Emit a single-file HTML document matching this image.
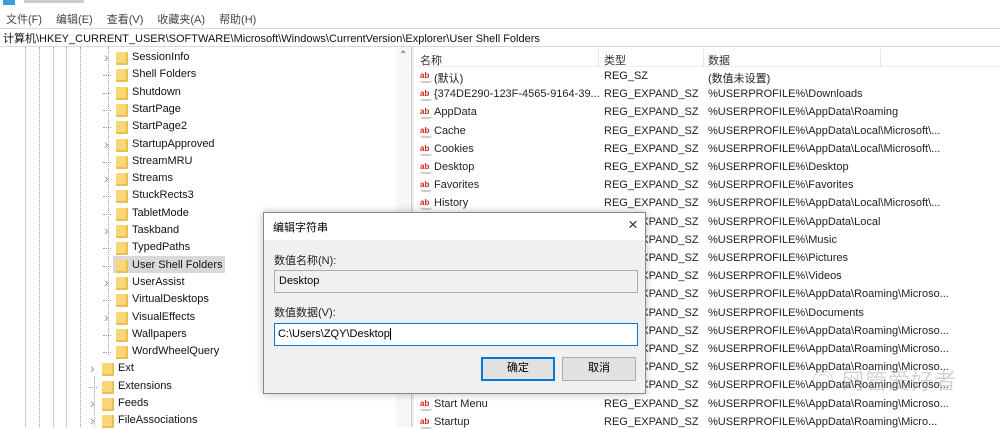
<!DOCTYPE html>
<html><head><meta charset="utf-8">
<style>
*{margin:0;padding:0;box-sizing:border-box}
body{width:1000px;height:422px;overflow:hidden;background:#fff;font-family:"Liberation Sans","Noto Sans CJK SC",sans-serif;font-size:11px;color:#000;position:relative}
.a{position:absolute;white-space:nowrap}
.menu span{color:#444;margin-right:14px}
.vl{position:absolute;top:47px;height:380px;border-left:1px dotted #a0a0a0;width:0}
.fold{position:absolute;width:12px;height:13px;background:#f8d774;border-radius:1px;box-shadow:inset -2px -2px 0 #e9bf4f}
.tx{position:absolute;font-size:11px;color:#111}
.exp{position:absolute;color:#999;font-size:14px;line-height:14px}
.hl{position:absolute;border-top:1px dotted #a0a0a0;width:8px}
.ab{position:absolute;width:12px;height:12px;font-size:8px;font-weight:bold;color:#c8261e;line-height:10px;border-bottom:2px solid #ccc;border-radius:0 0 3px 3px}
.ct{position:absolute;font-size:11px;color:#222}
</style></head><body>
<div class="a" style="left:3px;top:0;width:12px;height:5px;background:#3a9be0"></div>
<div class="a" style="left:24px;top:0;width:60px;height:3px;background:#ccc"></div>
<div class="a menu" style="left:6px;top:11px;font-size:11px"><span>文件(F)</span><span>编辑(E)</span><span>查看(V)</span><span>收藏夹(A)</span><span>帮助(H)</span></div>
<div class="a" style="left:0;top:28px;width:1000px;height:19px;border-top:1px solid #d9d9d9;border-bottom:1px solid #d9d9d9;background:#fff"></div>
<div class="a" style="left:3px;top:30px;font-size:11px;color:#111">计算机\HKEY_CURRENT_USER\SOFTWARE\Microsoft\Windows\CurrentVersion\Explorer\User Shell Folders</div>

<div class="vl" style="left:25px"></div>
<div class="vl" style="left:39px"></div>
<div class="vl" style="left:53px"></div>
<div class="vl" style="left:66px"></div>
<div class="vl" style="left:80px"></div>
<div class="vl" style="left:94px;top:376px;height:50px"></div>
<div class="vl" style="left:108px;top:47px;height:308px"></div>
<div class="a" style="left:396px;top:47px;width:15px;height:380px;background:#f7f7f7"></div>
<div class="a" style="left:399px;top:50px;color:#555;font-size:10px">&#8963;</div>
<div class="a" style="left:411px;top:47px;width:3px;height:380px;background:#eee;border-left:1px solid #ccc"></div>

<div class="a" style="left:113px;top:256px;width:112px;height:17px;background:#d9d9d9"></div>

<div id="tree"></div>

<div class="a" style="left:414px;top:47px;width:586px;height:20px;border-bottom:1px solid #eee"></div>
<div class="a" style="left:598px;top:49px;height:17px;border-left:1px solid #e5e5e5"></div>
<div class="a" style="left:703px;top:49px;height:17px;border-left:1px solid #e5e5e5"></div>
<div class="a" style="left:880px;top:49px;height:17px;border-left:1px solid #e5e5e5"></div>
<div class="ct" style="left:420px;top:52px;color:#333">名称</div>
<div class="ct" style="left:604px;top:52px;color:#333">类型</div>
<div class="ct" style="left:708px;top:52px;color:#333">数据</div>
<div id="list"></div>

<div class="a" style="left:812px;top:364px;font-size:22px;color:rgba(160,160,160,0.45);letter-spacing:1px">◎ 网管爱好者</div>

<div class="a" style="left:263px;top:212px;width:383px;height:182px;background:#f0f0f0;border:1px solid #888;box-shadow:0 0 8px rgba(0,0,0,.25)">
  <div class="a" style="left:0;top:0;width:381px;height:27px;background:#fff"></div>
  <div class="a" style="left:9px;top:6px;font-size:11px">编辑字符串</div>
  <div class="a" style="left:364px;top:2px;font-size:17px;color:#333;font-weight:300">×</div>
  <div class="a" style="left:10px;top:39px;font-size:11px;color:#222">数值名称(N):</div>
  <div class="a" style="left:10px;top:57px;width:364px;height:23px;background:#f0f0f0;border:1px solid #adadad;padding:4px 4px;font-size:11px">Desktop</div>
  <div class="a" style="left:10px;top:91px;font-size:11px;color:#222">数值数据(V):</div>
  <div class="a" style="left:10px;top:110px;width:364px;height:23px;background:#fff;border:1px solid #0078d7;padding:4px 3px;font-size:11px">C:\Users\ZQY\Desktop<span style="border-left:1px solid #000;margin-left:0"></span></div>
  <div class="a" style="left:217px;top:144px;width:74px;height:24px;background:#e1e1e1;border:2px solid #0078d7;text-align:center;line-height:19px;font-size:11px">确定</div>
  <div class="a" style="left:298px;top:144px;width:74px;height:24px;background:#e1e1e1;border:1px solid #adadad;text-align:center;line-height:21px;font-size:11px">取消</div>
</div>

<script>
var t=[["SessionInfo",1,1],["Shell Folders",1,0],["Shutdown",1,0],["StartPage",1,0],["StartPage2",1,0],["StartupApproved",1,1],["StreamMRU",1,0],["Streams",1,1],["StuckRects3",1,0],["TabletMode",1,0],["Taskband",1,1],["TypedPaths",1,0],["User Shell Folders",1,0],["UserAssist",1,1],["VirtualDesktops",1,0],["VisualEffects",1,1],["Wallpapers",1,0],["WordWheelQuery",1,0],["Ext",0,1],["Extensions",0,0],["Feeds",0,1],["FileAssociations",0,1]];
var h="";
t.forEach(function(r,i){var y=50+i*17.3;var fx=r[1]?116:102;
if(r[2])h+='<div class="exp" style="left:'+(fx-12)+'px;top:'+(y)+'px">&#8250;</div>';else h+='<div class="hl" style="left:'+(fx-13)+'px;top:'+(y+8)+'px"></div>';
h+='<div class="fold" style="left:'+fx+'px;top:'+(y+2)+'px"></div><div class="tx" style="left:'+(fx+16)+'px;top:'+(y+1)+'px">'+r[0]+'</div>';});
document.getElementById("tree").innerHTML=h;
var L=[["(默认)","REG_SZ","(数值未设置)"],["{374DE290-123F-4565-9164-39...","REG_EXPAND_SZ","%USERPROFILE%\\Downloads"],["AppData","REG_EXPAND_SZ","%USERPROFILE%\\AppData\\Roaming"],["Cache","REG_EXPAND_SZ","%USERPROFILE%\\AppData\\Local\\Microsoft\\..."],["Cookies","REG_EXPAND_SZ","%USERPROFILE%\\AppData\\Local\\Microsoft\\..."],["Desktop","REG_EXPAND_SZ","%USERPROFILE%\\Desktop"],["Favorites","REG_EXPAND_SZ","%USERPROFILE%\\Favorites"],["History","REG_EXPAND_SZ","%USERPROFILE%\\AppData\\Local\\Microsoft\\..."],["","REG_EXPAND_SZ","%USERPROFILE%\\AppData\\Local"],["","REG_EXPAND_SZ","%USERPROFILE%\\Music"],["","REG_EXPAND_SZ","%USERPROFILE%\\Pictures"],["","REG_EXPAND_SZ","%USERPROFILE%\\Videos"],["","REG_EXPAND_SZ","%USERPROFILE%\\AppData\\Roaming\\Microso..."],["","REG_EXPAND_SZ","%USERPROFILE%\\Documents"],["","REG_EXPAND_SZ","%USERPROFILE%\\AppData\\Roaming\\Microso..."],["","REG_EXPAND_SZ","%USERPROFILE%\\AppData\\Roaming\\Microso..."],["","REG_EXPAND_SZ","%USERPROFILE%\\AppData\\Roaming\\Microso..."],["","REG_EXPAND_SZ","%USERPROFILE%\\AppData\\Roaming\\Microso..."],["Start Menu","REG_EXPAND_SZ","%USERPROFILE%\\AppData\\Roaming\\Microso..."],["Startup","REG_EXPAND_SZ","%USERPROFILE%\\AppData\\Roaming\\Micro..."]];
h="";
L.forEach(function(r,i){var y=70+i*18.2;
h+='<div class="ab" style="left:420px;top:'+(y+1)+'px">ab</div><div class="ct" style="left:434px;top:'+y+'px">'+r[0]+'</div><div class="ct" style="left:604px;top:'+y+'px">'+r[1]+'</div><div class="ct" style="left:708px;top:'+y+'px">'+r[2]+'</div>';});
document.getElementById("list").innerHTML=h;
</script>
</body></html>
